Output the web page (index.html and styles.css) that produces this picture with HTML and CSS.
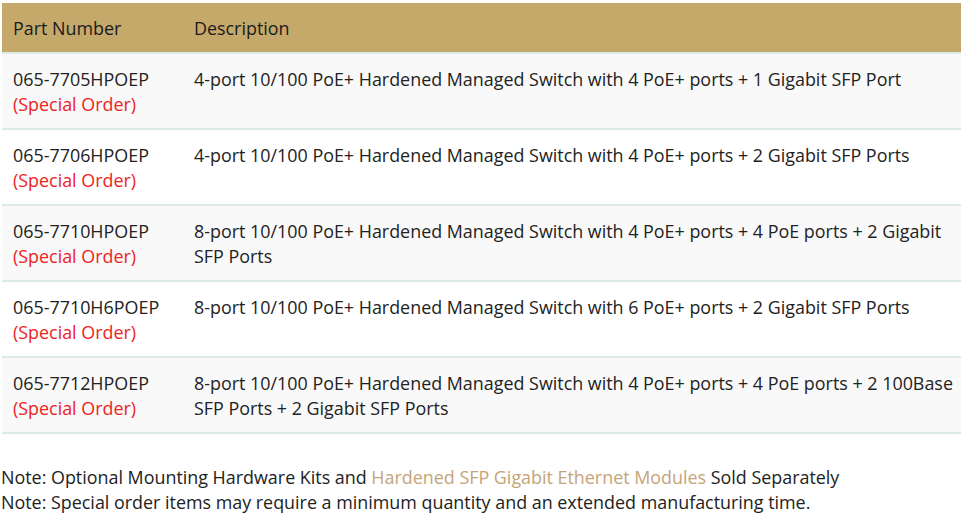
FILE: index.html
```html
<!DOCTYPE html>
<html>
<head>
<meta charset="utf-8">
<link rel="stylesheet" href="styles.css">
</head>
<body>
<div class="page">
  <table class="parts">
    <thead>
      <tr><th class="col-part">Part Number</th><th>Description</th></tr>
    </thead>
    <tbody>
      <tr><td>065-7705HPOEP<br><span class="special">(Special Order)</span></td><td>4-port 10/100 PoE+ Hardened Managed Switch with 4 PoE+ ports + 1 Gigabit SFP Port</td></tr>
      <tr><td>065-7706HPOEP<br><span class="special">(Special Order)</span></td><td>4-port 10/100 PoE+ Hardened Managed Switch with 4 PoE+ ports + 2 Gigabit SFP Ports</td></tr>
      <tr><td>065-7710HPOEP<br><span class="special">(Special Order)</span></td><td>8-port 10/100 PoE+ Hardened Managed Switch with 4 PoE+ ports + 4 PoE ports + 2 Gigabit SFP Ports</td></tr>
      <tr><td>065-7710H6POEP<br><span class="special">(Special Order)</span></td><td>8-port 10/100 PoE+ Hardened Managed Switch with 6 PoE+ ports + 2 Gigabit SFP Ports</td></tr>
      <tr><td>065-7712HPOEP<br><span class="special">(Special Order)</span></td><td>8-port 10/100 PoE+ Hardened Managed Switch with 4 PoE+ ports + 4 PoE ports + 2 100Base SFP Ports + 2 Gigabit SFP Ports</td></tr>
    </tbody>
  </table>
  <p class="notes">Note: Optional Mounting Hardware Kits and <a href="#">Hardened SFP Gigabit Ethernet Modules</a> Sold Separately<br>Note: Special order items may require a minimum quantity and an extended manufacturing time.</p>
</div>
</body>
</html>
```
FILE: styles.css
```css
html, body {
  margin: 0;
  padding: 0;
  background: #ffffff;
  overflow: hidden;
}
body {
  font-family: "Open Sans", "Liberation Sans", sans-serif;
  font-size: 17.9px;
  line-height: 25px;
  color: #222222;
}
.page {
  width: 980px;
  padding: 3px 0 0 1px;
}
.parts {
  border-collapse: collapse;
  width: 974px;
  margin-left: 1px;
}
.parts th {
  background: #c5a96a;
  font-weight: 400;
  text-align: left;
  padding: 13px 11px 11px 11px;
  color: #1a1a1a;
}
.parts th.col-part {
  width: 159px;
}
.parts td {
  padding: 13px 11px 11px 11px;
  vertical-align: top;
  border-top: 2px solid #dce9e9;
}
.parts tbody tr:nth-child(odd) td {
  background: #f9f9f9;
}
.parts tbody tr:last-child td {
  border-bottom: 2px solid #dce9e9;
}
.special {
  color: #ee2222;
}
.notes {
  margin: 31px 0 0 0;
}
.notes a {
  color: #c4a47a;
  text-decoration: none;
}
```
